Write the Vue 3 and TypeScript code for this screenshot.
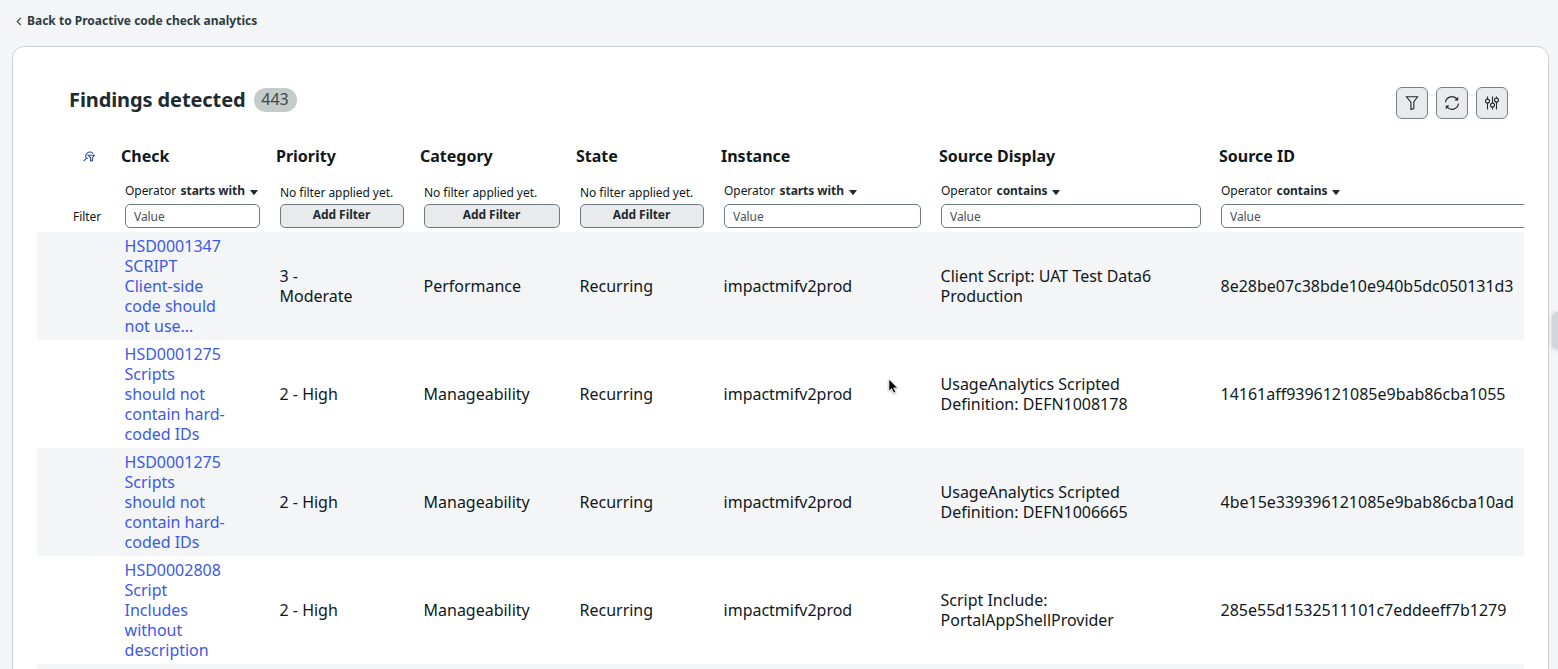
<script setup lang="ts">
type Filter = 'starts with' | 'contains' | 'none'

interface Column {
  key: string
  title: string
  filter: Filter
}

interface Finding {
  check: string
  priority: string
  category: string
  state: string
  instance: string
  display: string
  id: string
}

const columns: Column[] = [
  { key: 'check', title: 'Check', filter: 'starts with' },
  { key: 'priority', title: 'Priority', filter: 'none' },
  { key: 'category', title: 'Category', filter: 'none' },
  { key: 'state', title: 'State', filter: 'none' },
  { key: 'instance', title: 'Instance', filter: 'starts with' },
  { key: 'display', title: 'Source Display', filter: 'contains' },
  { key: 'source-id', title: 'Source ID', filter: 'contains' },
]

const findings: Finding[] = [
  {
    check: 'HSD0001347\nSCRIPT\nClient-side\ncode should\nnot use...',
    priority: '3 -\nModerate',
    category: 'Performance',
    state: 'Recurring',
    instance: 'impactmifv2prod',
    display: 'Client Script: UAT Test Data6\nProduction',
    id: '8e28be07c38bde10e940b5dc050131d3',
  },
  {
    check: 'HSD0001275\nScripts\nshould not\ncontain hard-\ncoded IDs',
    priority: '2 - High',
    category: 'Manageability',
    state: 'Recurring',
    instance: 'impactmifv2prod',
    display: 'UsageAnalytics Scripted\nDefinition: DEFN1008178',
    id: '14161aff9396121085e9bab86cba1055',
  },
  {
    check: 'HSD0001275\nScripts\nshould not\ncontain hard-\ncoded IDs',
    priority: '2 - High',
    category: 'Manageability',
    state: 'Recurring',
    instance: 'impactmifv2prod',
    display: 'UsageAnalytics Scripted\nDefinition: DEFN1006665',
    id: '4be15e339396121085e9bab86cba10ad',
  },
  {
    check: 'HSD0002808\nScript\nIncludes\nwithout\ndescription',
    priority: '2 - High',
    category: 'Manageability',
    state: 'Recurring',
    instance: 'impactmifv2prod',
    display: 'Script Include:\nPortalAppShellProvider',
    id: '285e55d1532511101c7eddeeff7b1279',
  },
]
</script>

<template>
  <div class="page">
    <a class="back">
      <svg class="chevron" viewBox="0 0 6 10"><path d="M5 1 1 5l4 4" /></svg>
      <span>Back to Proactive code check analytics</span>
    </a>

    <section class="card">
      <header class="heading">
        <h1>Findings detected</h1>
        <span class="count">443</span>
        <div class="actions">
          <button class="icon-button" aria-label="Filter">
            <svg viewBox="0 0 16 16"><path d="M2.5 1.8h11L9.8 7v6.6l-2.9.9V7.2z" /></svg>
          </button>
          <button class="icon-button" aria-label="Refresh">
            <svg viewBox="0 0 16 16">
              <path d="M1.5 7.3A6.5 6.5 0 0 1 13.2 4.4M14.5 8.7A6.5 6.5 0 0 1 2.8 11.6" />
              <path class="solid" d="M14.2 1.8v3.6h-3.7zM1.8 14.2v-3.6h3.7z" />
            </svg>
          </button>
          <button class="icon-button" aria-label="Settings">
            <svg viewBox="0 0 16 16">
              <path d="M3.5 1.5v2.6M3.5 8.1v6.4M8.5 1.5v6.6M8.5 12.1v2.4M12.5 1.5v1.6M12.5 7.1v7.4" />
              <circle cx="3.5" cy="6.1" r="2" /><circle cx="8.5" cy="10.1" r="2" /><circle cx="12.5" cy="5.1" r="2" />
            </svg>
          </button>
        </div>
      </header>

      <div class="table">
        <div class="row titles">
          <div class="lead">
            <svg class="search-filter" viewBox="0 0 12 12">
              <path d="M.7 11.2 3.4 8.2H5M3.4 8.2A4 4 0 1 1 10.2 3.8M5.2 5.3h6.2L9.5 7.6v2.9l-1.9.5V7.6z" />
            </svg>
          </div>
          <div v-for="column in columns" :key="column.key" class="title" :class="column.key">{{ column.title }}</div>
        </div>

        <div class="row filters">
          <div class="filter-label">Filter</div>
          <div v-for="column in columns" :key="column.key" class="filter">
            <template v-if="column.filter === 'none'">
              <div class="hint">No filter applied yet.</div>
              <button class="add">Add Filter</button>
            </template>
            <template v-else>
              <div class="operator">
                <span>Operator</span><b>{{ column.filter }}</b>
                <svg class="caret" viewBox="0 0 8 5"><path d="M0 0h8L4.6 4.6q-.6.6-1.2 0z" /></svg>
              </div>
              <input type="text" placeholder="Value" />
            </template>
          </div>
        </div>

        <div v-for="(finding, index) in findings" :key="index" class="row finding">
          <div></div>
          <a class="cell link">{{ finding.check }}</a>
          <div class="cell">{{ finding.priority }}</div>
          <div class="cell">{{ finding.category }}</div>
          <div class="cell">{{ finding.state }}</div>
          <div class="cell">{{ finding.instance }}</div>
          <div class="cell">{{ finding.display }}</div>
          <div class="cell">{{ finding.id }}</div>
        </div>
        <div class="row finding"></div>
      </div>
    </section>

    <div class="drawer-handle"></div>
    <svg class="pointer" viewBox="0 0 12 18">
      <path d="M1 1v13l3-2.7 2.1 4.8 2.3-1-2.1-4.6h4.2z" />
    </svg>
  </div>
</template>

<style>
body {
  margin: 0;
  overflow: hidden;
}
</style>

<style scoped>
.page {
  position: relative;
  box-sizing: border-box;
  height: 669px;
  overflow: hidden;
  padding: 0 9px 0 12px;
  background: #f4f5f7;
  color: #10181b;
  font-family: "Noto Sans", sans-serif;
  font-size: 16px;
  line-height: 20px;
}

.back {
  display: flex;
  align-items: center;
  height: 46px;
  box-sizing: border-box;
  padding: 0 0 5px 4px;
  gap: 5px;
  color: #2e3d42;
  font-size: 12px;
  font-weight: 700;
}

.chevron {
  width: 6px;
  height: 9px;
  margin-top: 2px;
  fill: none;
  stroke: #2e3d42;
  stroke-width: 1.2;
}

.card {
  box-sizing: border-box;
  height: 700px;
  padding: 0 24px;
  border: 1px solid #ccd3d6;
  border-radius: 12px;
  background: #fff;
}

.heading {
  display: flex;
  align-items: center;
  height: 92px;
  box-sizing: border-box;
  padding: 14px 16px 0 32px;
}

h1 {
  margin: 0;
  color: #1f2b2f;
  font-size: 20px;
  line-height: 28px;
  font-weight: 700;
  letter-spacing: -0.1px;
}

.count {
  box-sizing: border-box;
  width: 43px;
  height: 24px;
  margin-left: 8px;
  border-radius: 12px;
  background: #c5caca;
  color: #3c484c;
  line-height: 23px;
  text-align: center;
}

.actions {
  display: flex;
  gap: 8px;
  margin: 5px 0 0 auto;
}

.icon-button {
  display: grid;
  place-items: center;
  width: 32px;
  height: 32px;
  padding: 0;
  border: 1px solid #738286;
  border-radius: 6px;
  background: #e9eaec;
}

.icon-button svg {
  width: 16px;
  height: 16px;
  fill: none;
  stroke: #1f2b2f;
  stroke-width: 1.1;
}

.icon-button .solid {
  fill: #1f2b2f;
  stroke: none;
}

.table {
  overflow: hidden;
}

.row {
  display: grid;
  grid-template-columns: 84px 155px 144px 156px 144px 217px 280px 330px;
  width: 1510px;
}

.titles {
  height: 34px;
  padding-bottom: 2px;
  align-items: center;
  font-weight: 700;
}

.lead {
  padding-left: 46px;
}

.search-filter {
  display: block;
  width: 12px;
  height: 12px;
  fill: none;
  stroke: #3549a8;
  stroke-width: 1.1;
}

.instance {
  padding-left: 1px;
}

.display,
.source-id {
  padding-left: 2px;
}

.filters {
  height: 57px;
  font-size: 12px;
  letter-spacing: -0.06px;
}

.filter-label {
  padding: 32px 0 0 36px;
}

.filter {
  display: flex;
  flex-direction: column;
  padding: 5px 16px 0 4px;
}

.hint {
  height: 24px;
  line-height: 26px;
}

.operator {
  display: flex;
  align-items: center;
  box-sizing: border-box;
  height: 24px;
  line-height: 20px;
  padding-bottom: 2px;
}

.operator b {
  margin: 0 5px 0 4.5px;
  color: #1f2b2f;
}

.caret {
  width: 8px;
  height: 5px;
  margin-top: 3px;
  fill: #1f2b2f;
}

.add,
input {
  box-sizing: border-box;
  width: 100%;
  height: 24px;
  border: 1px solid #6a7a80;
  border-radius: 5px;
  font: inherit;
  letter-spacing: inherit;
}

.add {
  padding: 0 1px 3px 0;
  background: #e9eaec;
  color: #1f2b2f;
  font-weight: 700;
  line-height: 19px;
}

input {
  padding: 0 8px;
  background: #fff;
  outline: none;
}

input::placeholder {
  color: #47545a;
  opacity: 1;
}

.finding {
  height: 108px;
  align-items: center;
}

.finding:nth-child(odd) {
  background: #f4f5f7;
}

.cell {
  padding-left: 3.6px;
  white-space: pre;
  letter-spacing: -0.02px;
}

.link {
  color: #3c59e7;
}

.drawer-handle {
  position: absolute;
  top: 312px;
  left: 1552px;
  width: 12px;
  height: 37px;
  border-radius: 5px;
  background: #d2d6da;
  box-shadow: 0 1px 5px rgba(30, 40, 50, 0.18);
}

.pointer {
  position: absolute;
  top: 378px;
  left: 888px;
  width: 11px;
  height: 17px;
  fill: #000;
  stroke: #fff;
  stroke-width: 0.8;
  filter: drop-shadow(0 1px 1px rgba(0, 0, 0, 0.3));
}
</style>
